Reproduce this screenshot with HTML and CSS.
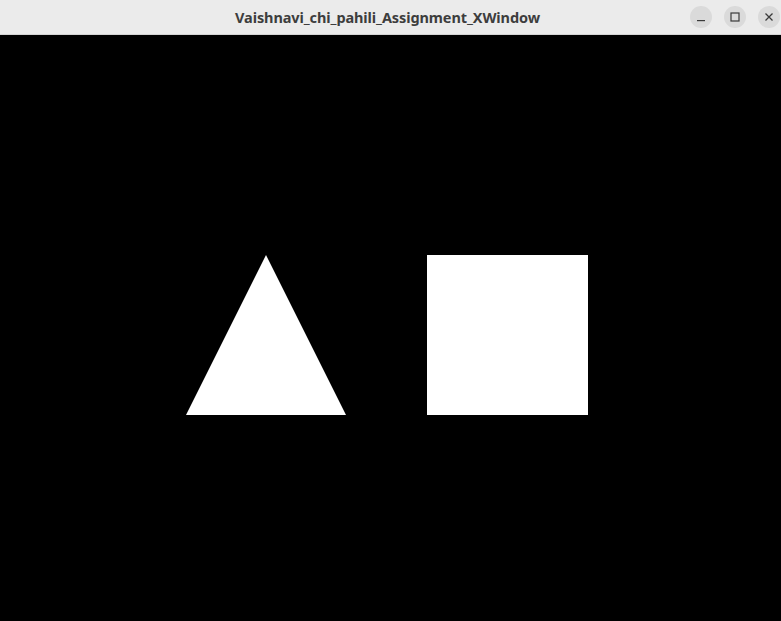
FILE: index.html
```html
<!DOCTYPE html>
<html>
<head>
<meta charset="utf-8">
<link rel="stylesheet" href="styles.css">
</head>
<body>
<div class="window">
  <header class="titlebar">
    <div class="spacer"></div>
    <div class="title">Vaishnavi_chi_pahili_Assignment_XWindow</div>
    <div class="controls">
      <span class="btn">
        <svg width="10" height="10" viewBox="0 0 10 10"><rect x="1" y="8" width="8" height="1.2" fill="#3a3a3a"/></svg>
      </span>
      <span class="btn">
        <svg width="10" height="10" viewBox="0 0 10 10"><rect x="1" y="1" width="8" height="8" fill="none" stroke="#3a3a3a" stroke-width="1.2"/></svg>
      </span>
      <span class="btn">
        <svg width="10" height="10" viewBox="0 0 10 10"><path d="M1.5 1.5 L8.5 8.5 M8.5 1.5 L1.5 8.5" stroke="#3a3a3a" stroke-width="1.3"/></svg>
      </span>
    </div>
  </header>
  <main class="canvas">
    <svg class="drawing" width="781" height="586" viewBox="0 0 781 586">
      <polygon points="266,220 186,380 346,380" fill="#ffffff"/>
      <rect x="427" y="220" width="161" height="160" fill="#ffffff"/>
    </svg>
  </main>
</div>
</body>
</html>
```
FILE: styles.css
```css
html, body {
  margin: 0;
  padding: 0;
  background: #000;
}
.window {
  width: 781px;
  height: 621px;
  display: flex;
  flex-direction: column;
  overflow: hidden;
}
.titlebar {
  height: 34px;
  background: #ebebeb;
  border-bottom: 1px solid #d4d4d4;
  display: grid;
  grid-template-columns: 1fr auto 1fr;
  align-items: center;
  flex: none;
}
.title {
  font-family: "Noto Sans", "DejaVu Sans", sans-serif;
  font-weight: 700;
  font-size: 14.5px;
  color: #3d3d3d;
  letter-spacing: -0.1px;
  padding-right: 6px;
}
.controls {
  display: flex;
  justify-content: flex-end;
  gap: 12px;
  padding-right: 1px;
}
.btn {
  width: 22px;
  height: 22px;
  border-radius: 50%;
  background: #dadada;
  display: flex;
  align-items: center;
  justify-content: center;
}
.btn svg {
  display: block;
}
.canvas {
  flex: 1;
  background: #000;
}
.drawing {
  display: block;
}
```
